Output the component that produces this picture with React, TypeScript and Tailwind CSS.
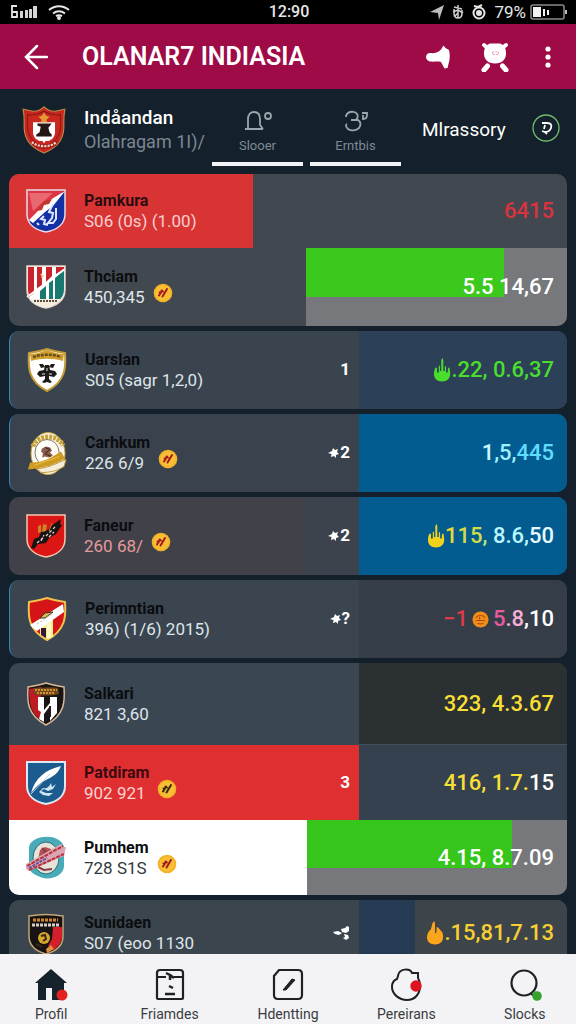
import { ReactNode, useState } from "react";
import clsx from "clsx";

type Segment = { text: string; color: string };
type CoinTone = "plain" | "dark";

type Team = {
  name: string;
  sub: string;
  crest: ReactNode;
  height: string;
  fills: ReactNode;
  value: ReactNode;
  count?: ReactNode;
  coin?: CoinTone;
  nameClass?: string;
  subClass?: string;
};

function Segments({ parts }: { parts: Segment[] }) {
  return (
    <span className="whitespace-pre">
      {parts.map((p, i) => (
        <span key={i} className={p.color}>
          {p.text}
        </span>
      ))}
    </span>
  );
}

function Flame({ className }: { className: string }) {
  return (
    <svg viewBox="0 0 18 24" className={clsx("h-6 w-[18px] shrink-0", className)} fill="currentColor" aria-hidden="true">
      <path d="M9 23.500c-5 0-8-3-8-7.500 0-3 .5-5 1.700-6.500L4 10v4.500h1.800V8l1.200-.5V13h1.300V2L9.500 0l.8 2v11h1.500V8l1.300.5v6h1.600l.3-4.500 1.200-.5c.8 2 1 4.500 1 6.500 0 4.500-3.200 7.500-8.200 7.500z" />
    </svg>
  );
}

function DropFlame({ className }: { className: string }) {
  return (
    <svg viewBox="0 0 18 24" className={clsx("h-6 w-[18px] shrink-0", className)} fill="currentColor" aria-hidden="true">
      <path d="M9 23.500c-5 0-8-3-8-7.200 0-3.300 1.500-5.800 4-8.300L6.500 2 8.500 0 9 3v9l1.300.3.300-6.300 1.500.5 4 4.500c.8 1.500 1 3.300 1 5.300 0 4.200-3.100 7.200-8.100 7.200z" />
    </svg>
  );
}

function Coin({ tone }: { tone: CoinTone }) {
  return (
    <svg viewBox="0 0 20 20" className="mb-1 size-5 shrink-0 self-end" aria-hidden="true">
      <circle cx="10" cy="10" r="9.300" fill="#f2b32b" />
      <circle cx="10" cy="10" r="7.500" fill="#f8bf35" />
      <path
        d="M6 12.500l3-5M9.500 13.500l4.500-7.500M8.500 7.500l1.500 1M6.500 9.500l1 1"
        stroke={tone === "dark" ? "#3a2713" : "#a3191d"}
        strokeWidth="2"
        strokeLinecap="round"
      />
    </svg>
  );
}

function Burst() {
  return (
    <svg viewBox="0 0 12 12" className="size-3 shrink-0" aria-hidden="true">
      <path d="M0 6l4-2 1-3 2 2 3-1-1 3 2 2-3 1v3L6 9l-3 1 .5-3z" fill="#fff" />
    </svg>
  );
}

function Crest({ children, className }: { children: ReactNode; className?: string }) {
  return (
    <svg viewBox="0 0 40 44" className={clsx("shrink-0", className ?? "h-11 w-10")} fill="none" aria-hidden="true">
      {children}
    </svg>
  );
}

const SHIELD = "M1 1h38v24c0 10-8 16-19 18C9 41 1 35 1 25z";
const POINTED = "M20 1c6 2 12 3 18 4 1 14 1 28-18 38C1 33 1 19 2 5 8 4 14 3 20 1z";

const crests = {
  main: (
    <Crest className="h-[50px] w-11">
      <path d="M20 1c3 3 7 4 10 4l9-2c-1 5-1 8-1 12 1 14-4 22-18 28C6 37 1 29 2 15 2 11 2 8 1 3l9 2c3 0 7-1 10-4z" fill="#c92720" stroke="#bd8b45" strokeWidth="1" />
      <path d="M5 8c5 1 10 0 15-3 5 3 10 4 15 3v9c0 10-4 16-15 22C9 33 5 27 5 17z" stroke="#8c1a14" />
      <path d="M10 15h20v9c0 4-3 7-6 8H16c-3-1-6-4-6-8z" fill="#fff" />
      <path d="M14 16h13l-3 4 1 4 2 2v2H13v-2l3-2 1-5-3-1z" fill="#251715" />
      <path d="M18 9l2-3 2 3 3 1-3 3 1 2h-6l1-2-3-3z" fill="#e29a35" />
      <path d="M7 31c4 5 22 6 27-1l-3 6c-6 4-15 4-21 0z" fill="#a3201b" />
      <path d="M9 33c6 5 17 5 22 0" stroke="#f2d6cd" strokeWidth="2" strokeDasharray="2 1" />
      <path d="M18 31l2 3 2-3z" fill="#fff" />
    </Crest>
  ),
  pamkura: (
    <Crest>
      <path d={SHIELD} fill="#1430a5" />
      <path d="M1 1h38L12 27 3 33C1 30 1 28 1 25z" fill="#dc3545" />
      <path d="M3 4h24L7 22z" fill="#e8696f" />
      <path d="M39 2L24 11 15 17 11 23 3 31l4 3 12-11 8-6z" fill="#fff" />
      <path d="M13 18l5-6 8-2-3 5-5 1-2 5-5 1z" fill="#c3352e" />
      <path d="M27 15l-4 8 4 1-1 5-4 5h5l3-4V19M18 27l-3 3 4 1-1 4 4 1M11 34l2 2" stroke="#dfe7ff" strokeWidth="2" />
      <path d={SHIELD} stroke="#e9dbe9" strokeWidth="1.500" />
    </Crest>
  ),
  thciam: (
    <Crest>
      <path d={SHIELD} fill="#fff" />
      <path d="M2 2h6v26l-5 4-1-7zM11 2h5v18l-5 5zM20 2h6v9l-6 6zM30 2h8v2l-8 5z" fill="#c8232b" />
      <path d="M38 5v20c0 4-2 8-5 10h-4V13zM23 18l4-3v20h-4zM14 26l6-5v14h-6z" fill="#17796f" />
      <path d="M1 32L39 4" stroke="#fff" strokeWidth="2" />
      <path d="M5 34h30c-3 5-9 7-15 8-6-1-12-4-15-8z" fill="#f6eedb" />
      <path d="M8 36h24" stroke="#554b42" strokeWidth="2" strokeDasharray="2 1" />
      <path d="M15 9l2 2-1 2" stroke="#f4d9b5" strokeWidth="2" />
      <path d={SHIELD} stroke="#e7d8d0" strokeWidth="1.500" />
    </Crest>
  ),
  uarslan: (
    <Crest>
      <path d={POINTED} fill="#fff" stroke="#c59b35" strokeWidth="2" />
      <path d="M3 6c6 0 12-2 17-4 5 2 11 4 17 4l-1 7c-10-3-22-3-32 0z" fill="#d09f2e" />
      <path d="M6 9c9-3 20-3 28 0" stroke="#65501d" strokeWidth="2.500" strokeDasharray="3 1" />
      <path d="M12 16l4 0 2 3-4 1zM28 16l-4 0-2 3 4 1zM18 17h4l1 5 5 1 2 3-3 3-5-1v3l3 3-2 1-3-1-3 1-2-1 3-3v-3l-5 1-3-3 2-3 5-1z" fill="#1d1c1b" />
      <path d="M15 26h3M22 26h3M20 20v3" stroke="#e9e5dc" />
    </Crest>
  ),
  carhkum: (
    <Crest className="h-[47px] w-10">
      <ellipse cx="21" cy="22" rx="17" ry="21" fill="#f8f6ef" stroke="#c9a43a" strokeWidth="1" />
      <path d="M6 15C10 3 31 2 36 14" stroke="#c9a43a" strokeWidth="5" strokeDasharray="3 1" />
      <ellipse cx="20" cy="21" rx="12" ry="13" stroke="#857760" fill="#fffdf8" />
      <path d="M15 17l4-2 4 1 2 3-2 2 3 3-4 2-4-1-3 1 1-4-2-2z" fill="#8d5d4d" />
      <path d="M18 16l5 2-5 4 6 3" stroke="#352424" />
      <path d="M3 31c11 1 22-5 31-11l4 7C27 34 13 37 1 38z" fill="#cf9b20" />
      <path d="M10 37c10 0 19-5 29-9l-2 7c-8 5-15 6-23 6z" fill="#f5eddb" stroke="#c39a41" />
      <path d="M7 34l25-9" stroke="#e8bf4b" />
    </Crest>
  ),
  faneur: (
    <Crest>
      <path d={SHIELD} fill="#dc1515" stroke="#f3c7b1" strokeWidth="1.500" />
      <path d="M5 34l3-9 5-2 2-5 7-2 3-4 10-7-1 5 2 1-6 9-7 4-3 5-8 1-4 5z" fill="#191313" />
      <path d="M11 29l7-6M20 22l9-9M15 27l3-6M23 23l5-5" stroke="#e9d8cf" strokeWidth="1.200" strokeDasharray="3 2" />
      <path d="M12 12l3-1v7l-3 1zM17 10l4 1-1 6-4 1z" fill="#cb8627" />
      <path d="M26 9l-3 8" stroke="#b98124" />
    </Crest>
  ),
  perimntian: (
    <Crest>
      <path d={POINTED} fill="#d51418" stroke="#f1c34a" strokeWidth="2" />
      <path d="M13 30l7-7h6v17l-6 2-7-4z" fill="#f3ee9a" />
      <path d="M14 31h5v10l-5-3z" fill="#371831" />
      <path d="M3 28L36 7l1 8L10 34c-3-2-5-4-7-6z" fill="#fff" />
      <path d="M20 26h4v15l-4 1z" fill="#fffac0" />
      <path d="M13 21l5-5 8-1-8 6z" fill="#ddb84d" stroke="#37322b" />
      <path d="M10 27l15-10" stroke="#bcae9b" strokeDasharray="2 2" />
    </Crest>
  ),
  salkari: (
    <Crest>
      <path d={POINTED} fill="#171515" stroke="#d9b895" strokeWidth="1.500" />
      <path d="M3 7l12-2v33C6 32 3 25 3 7z" fill="#bd1a24" />
      <path d="M8 6c7 0 17-1 24 0l1 6c-8 2-18 2-25 0z" fill="#744619" />
      <path d="M9 8h22M11 11h18" stroke="#d09335" strokeWidth="2" strokeDasharray="2 1" />
      <path d="M12 15h6v13l6-7v-6h7v16l-7 8V24l-6 8v8l-5-3 2-7-3-2z" fill="#fff" />
      <path d="M24 24v11" stroke="#24191a" strokeWidth="2" />
    </Crest>
  ),
  patdiram: (
    <Crest>
      <path d={SHIELD} fill="#1b5b8e" stroke="#dce9f1" strokeWidth="2" />
      <path d="M5 32C9 17 19 9 35 5c-3 8-9 11-15 14-4 2-8 4-15 13z" fill="#fff" />
      <path d="M5 33L24 13" stroke="#b6d6e8" />
      <path d="M17 27c4 1 6-1 8-5l1 4 4-3-3 5-5 2-4-2-3 2 5 2h7l-4 3-6-1-4-3z" fill="#cde6f1" />
    </Crest>
  ),
  pumhem: (
    <Crest>
      <path d="M10 3C16 0 26 0 31 3c4 2 7 5 7 9v18c0 5-4 9-9 11-5 2-12 2-17-1-5-2-9-5-9-10V12c0-4 3-7 7-9z" fill="#48abb7" />
      <ellipse cx="20" cy="22" rx="13" ry="16" fill="#e8e3d8" stroke="#266c7d" />
      <path d="M14 14l5-3 6 2 2 5-3 5-6 3-6-2z" fill="#b65050" />
      <path d="M16 12l4 4-4 5 8 1M12 31l6 3 8-1" stroke="#873b43" strokeWidth="2" />
      <path d="M0 28l35-20 2 3h3l-2 9-35 15-3-2z" fill="#dca5b2" />
      <path d="M1 30L37 10M3 34l35-16" stroke="#b5313d" strokeWidth="2" strokeDasharray="4 1" />
      <path d="M3 32l18-10" stroke="#5b58a0" strokeWidth="2" strokeDasharray="3 1" />
    </Crest>
  ),
  sunidaen: (
    <Crest>
      <path d="M3 5c11-2 23-2 34 0v20c0 9-6 15-17 18C9 40 3 34 3 25z" fill="#171313" stroke="#c2a67c" strokeWidth="1.500" />
      <path d="M27 16h9v11c-1 5-4 9-8 12l-6-4 4-7z" fill="#d31f2a" />
      <path d="M7 9h25" stroke="#d0862d" strokeWidth="3" strokeDasharray="3 1" />
      <path d="M6 14h28" stroke="#d6cfc8" strokeWidth="3" strokeDasharray="3 1" />
      <circle cx="18" cy="27" r="6" fill="#d7a62d" />
      <path d="M15 25l4-1 1 4-3 2M10 33l6 3" stroke="#3a2913" strokeWidth="2" />
      <path d="M20 38l5-4 3 4-7 4z" fill="#dd9039" />
    </Crest>
  ),
};

const groups: { frame: string; teams: Team[] }[] = [
  {
    frame: "bg-[#42484f]",
    teams: [
      {
        name: "Pamkura",
        sub: "S06 (0s) (1.00)",
        crest: crests.pamkura,
        height: "h-[74px]",
        fills: <div className="w-[244px] bg-[#d93434]" />,
        value: <Segments parts={[{ text: "6415", color: "text-[#d8333f]" }]} />,
        nameClass: "text-[#2c0c10]",
        subClass: "text-[#f8cfd0]",
      },
      {
        name: "Thciam",
        sub: "450,345",
        crest: crests.thciam,
        height: "h-[78px]",
        fills: (
          <div className="ml-auto w-[261px] bg-[#77787b]">
            <div className="h-[49px] w-[198px] bg-[#3cc91e]" />
          </div>
        ),
        value: <Segments parts={[{ text: "5.5 14,67", color: "text-white" }]} />,
        coin: "plain",
      },
    ],
  },
  {
    frame: "border-l border-[#3486bd] bg-[#3a444e]",
    teams: [
      {
        name: "Uarslan",
        sub: "S05 (sagr 1,2,0)",
        crest: crests.uarslan,
        height: "h-[78px]",
        fills: <div className="ml-auto w-52 bg-[#2c4057]" />,
        value: (
          <>
            <Flame className="text-[#4ade2c]" />
            <Segments parts={[{ text: ".22, 0.6,37", color: "text-[#4ade2c]" }]} />
          </>
        ),
        count: "1",
      },
    ],
  },
  {
    frame: "border-l border-[#3486bd] bg-[#3a424d]",
    teams: [
      {
        name: "Carhkum",
        sub: "226 6/9",
        crest: crests.carhkum,
        height: "h-[78px]",
        fills: <div className="ml-auto w-52 bg-[#035c90]" />,
        value: (
          <Segments
            parts={[
              { text: "1", color: "text-[#c9f8ff]" },
              { text: ",5,", color: "text-[#9cf0ff]" },
              { text: "445", color: "text-[#5fdcff]" },
            ]}
          />
        ),
        count: (
          <>
            <Burst />2
          </>
        ),
        coin: "plain",
      },
    ],
  },
  {
    frame: "bg-[#414249]",
    teams: [
      {
        name: "Faneur",
        sub: "260 68/",
        crest: crests.faneur,
        height: "h-[78px]",
        fills: (
          <>
            <div className="ml-auto w-[54px] bg-[#3c434c]" />
            <div className="w-52 bg-[#035c90]" />
          </>
        ),
        value: (
          <>
            <Flame className="text-[#f3d21c]" />
            <Segments
              parts={[
                { text: "1", color: "text-[#e8d932]" },
                { text: "15", color: "text-[#cfdc48]" },
                { text: ", ", color: "text-[#b8e878]" },
                { text: "8.6,", color: "text-[#b9f7ff]" },
                { text: "50", color: "text-[#e6fbff]" },
              ]}
            />
          </>
        ),
        count: (
          <>
            <Burst />2
          </>
        ),
        coin: "plain",
        subClass: "text-[#e59a9c]",
      },
    ],
  },
  {
    frame: "border-l border-[#3486bd] bg-[#3a4550]",
    teams: [
      {
        name: "Perimntian",
        sub: "396) (1/6) 2015)",
        crest: crests.perimntian,
        height: "h-[78px]",
        fills: <div className="ml-auto w-52 bg-[#353e48]" />,
        value: (
          <>
            <span className="text-[#dd3a4a]">−1</span>
            <svg viewBox="0 0 18 18" className="mx-1 size-[17px]" fill="none" aria-hidden="true">
              <circle cx="9" cy="9" r="8.500" fill="#f28c18" />
              <path d="M4 7c3-3 7-3 10 0M4 10h10M6 13c2 1 4 1 6 0M8 6v3" stroke="#a84b0b" strokeWidth="1.200" />
            </svg>
            <Segments
              parts={[
                { text: "5", color: "text-[#e85a9b]" },
                { text: ".8", color: "text-[#f7aed3]" },
                { text: ",10", color: "text-white" },
              ]}
            />
          </>
        ),
        count: (
          <>
            <Burst />?
          </>
        ),
      },
    ],
  },
  {
    frame: "bg-[#3a4652]",
    teams: [
      {
        name: "Salkari",
        sub: "821 3,60",
        crest: crests.salkari,
        height: "h-[82px]",
        fills: <div className="ml-auto w-52 border-b border-[#46505a] bg-[#2b3033]" />,
        value: <Segments parts={[{ text: "323, 4.3.67", color: "text-[#f8df35]" }]} />,
      },
      {
        name: "Patdiram",
        sub: "902 921",
        crest: crests.patdiram,
        height: "h-[75px]",
        fills: (
          <>
            <div className="flex-1 bg-[#df2f30]" />
            <div className="w-52 bg-[#35414e]" />
          </>
        ),
        value: (
          <Segments
            parts={[
              { text: "416, 1.7.", color: "text-[#f8df35]" },
              { text: "15", color: "text-white" },
            ]}
          />
        ),
        count: "3",
        coin: "dark",
        nameClass: "text-[#3a0a10]",
        subClass: "text-[#fbd3d3]",
      },
      {
        name: "Pumhem",
        sub: "728 S1S",
        crest: crests.pumhem,
        height: "h-[75px]",
        fills: (
          <>
            <div className="flex-1 bg-white" />
            <div className="w-[260px] bg-[#77787b]">
              <div className="h-12 w-[205px] bg-[#36c51b]" />
            </div>
          </>
        ),
        value: <Segments parts={[{ text: "4.15, 8.7.09", color: "text-white" }]} />,
        coin: "plain",
        subClass: "text-[#33383d]",
      },
    ],
  },
  {
    frame: "rounded-b-none bg-[#3b454e]",
    teams: [
      {
        name: "Sunidaen",
        sub: "S07 (eoo 1130",
        crest: crests.sunidaen,
        height: "h-[66px]",
        fills: (
          <>
            <div className="ml-auto w-14 bg-[#243b53]" />
            <div className="w-[152px] bg-[#3d444a]" />
          </>
        ),
        value: (
          <>
            <DropFlame className="text-[#fba51a]" />
            <Segments parts={[{ text: ".15,81,7.13", color: "text-[#f5cf33]" }]} />
          </>
        ),
        count: (
          <svg viewBox="0 0 18 16" className="h-4 w-[18px]" fill="#fff" aria-hidden="true">
            <path d="M1 7l5-1 4 2-3 2-4-1zM9 4l4-1 2-2 2 1v4l-3 2-4-1zM12 9l4 1 1 3-3 2-3-2 2-1z" />
          </svg>
        ),
      },
    ],
  },
];

function TeamRow({ team }: { team: Team }) {
  return (
    <li className={clsx("grid", team.height)}>
      <div className="flex [grid-area:1/1]">{team.fills}</div>
      <div className="grid grid-cols-[1fr_208px] items-center [grid-area:1/1]">
        <div className="flex items-center pr-[9px] pl-[17px]">
          {team.crest}
          <div className="ml-[18px] flex gap-2">
            <div>
              <p className={clsx("text-[16px] leading-5 font-bold", team.nameClass ?? "text-[#0b0d10]")}>{team.name}</p>
              <p className={clsx("text-[17px] leading-5 whitespace-nowrap", team.subClass ?? "text-[#dfe5ea]")}>{team.sub}</p>
            </div>
            {team.coin && <Coin tone={team.coin} />}
          </div>
          <div className="ml-auto flex items-center text-[17px] font-bold text-white">{team.count}</div>
        </div>
        <div className="flex items-center justify-end pr-[13px] text-[22px] leading-7 font-medium">{team.value}</div>
      </div>
    </li>
  );
}

function StatusBar() {
  return (
    <div className="grid h-6 shrink-0 grid-cols-3 items-center bg-black pr-2 pl-[10px] text-[16px] leading-5 text-[#e6e6e6]">
      <div className="flex items-center gap-[10px]">
        <svg viewBox="0 0 28 14" className="h-[14px] w-7" fill="none" aria-hidden="true">
          <path d="M7 1H2v11h5V7H2" stroke="#e6e6e6" strokeWidth="1.800" />
          <path d="M10 6h3v7h-3zM15 5h3v8h-3zM19 4h3v9h-3zM23 1h4v12h-4z" fill="#d5d5d5" />
        </svg>
        <svg viewBox="0 0 22 15" className="h-[15px] w-[22px]" fill="none" stroke="#e6e6e6" strokeWidth="2" aria-hidden="true">
          <path d="M1 5c6-5 14-5 20 0M5 8.500c4-3 8-3 12 0M8 11c2-1 4-1 6 0" />
          <circle cx="11" cy="13" r="1" fill="#e6e6e6" />
        </svg>
      </div>
      <div className="text-center font-medium">12:90</div>
      <div className="flex items-center justify-end gap-2">
        <svg viewBox="0 0 14 15" className="h-[15px] w-[14px]" fill="#bdbdbd" aria-hidden="true">
          <path d="M14 0L9 15l-1-7-8-1z" />
        </svg>
        <svg viewBox="0 0 12 16" className="h-4 w-3" fill="none" stroke="#cfcfcf" strokeWidth="1.500" aria-hidden="true">
          <path d="M2 3l8 2M6 1v13M2 5v4c0 3 1 5 4 5s4-2 4-5V6M1 8l5-2 5 3M3 12l3-3" />
        </svg>
        <svg viewBox="0 0 14 16" className="h-4 w-[14px]" fill="none" stroke="#e6e6e6" strokeWidth="2" aria-hidden="true">
          <circle cx="7" cy="9" r="5.500" />
          <circle cx="7" cy="9" r="2" fill="#e6e6e6" />
          <path d="M2 2l4 1 4-2" />
        </svg>
        <span className="text-[17px]">79%</span>
        <svg viewBox="0 0 38 16" className="-ml-1 h-4 w-[38px] shrink-0" fill="none" aria-hidden="true">
          <rect x="1" y="1" width="33" height="14" rx="2" stroke="#8b8b8b" strokeWidth="1.500" />
          <path d="M3 3h8v10H3zM13 5h2v7h-2zM17 6h2v5h-2z" fill="#f3f3f3" />
          <path d="M36 6v4" stroke="#bbb" strokeWidth="2" />
        </svg>
      </div>
    </div>
  );
}

function AppBar() {
  return (
    <header className="flex h-[65px] shrink-0 items-center bg-[#9e0b46] px-6 text-white">
      <button aria-label="Back">
        <svg viewBox="0 0 24 26" className="h-[26px] w-6" fill="none" stroke="currentColor" strokeWidth="2.500" strokeLinecap="round" aria-hidden="true">
          <path d="M23 13H2M13 2L2 13l11 11" />
        </svg>
      </button>
      <h1 className="ml-[34px] flex-1 text-[25px] leading-8 font-semibold whitespace-nowrap">OLANAR7 INDIASIA</h1>
      <button aria-label="Announcements">
        <svg viewBox="0 0 26 24" className="h-6 w-[26px]" fill="currentColor" aria-hidden="true">
          <path d="M5 8c4 .5 8 0 11-3.500L18.500.5l2 2.500 3.500 2c1 4 1 8 0 12l-1.500 6-3 .5-3.500-6.500c-3-1-7 0-11-.5C3 16 1 14.500 1 12s2-4 4-4z" />
        </svg>
      </button>
      <button aria-label="Alarm" className="ml-[30px]">
        <svg viewBox="0 0 28 30" className="h-[30px] w-7" fill="none" aria-hidden="true">
          <path d="M3 3l5 4M25 3l-5 4" stroke="#fff" strokeWidth="4" strokeLinecap="round" />
          <path d="M6.500 24L3 28M21.500 24l3.500 4" stroke="#fff" strokeWidth="5" strokeLinecap="round" />
          <path d="M9 1.500h10c5 2 6 6 6 10 0 6-4 10-11 10s-11-4-11-10c0-4 1-8 6-10z" fill="#fff" />
          <path d="M11.500 10h6v2.500h-6z" stroke="#e9a5bd" strokeDasharray="2 1" />
        </svg>
      </button>
      <button aria-label="More" className="ml-[35px]">
        <svg viewBox="0 0 8 24" className="h-6 w-2" fill="currentColor" aria-hidden="true">
          <circle cx="4" cy="4" r="2.600" />
          <circle cx="4" cy="12" r="2.600" />
          <circle cx="4" cy="20" r="2.600" />
        </svg>
      </button>
    </header>
  );
}

const tabs = [
  {
    label: "Slooer",
    icon: (
      <>
        <path d="M1 19h18M4 19V9c0-5 3-7 6-7 4 0 6 3 6 7v6l3 4" />
        <circle cx="24" cy="6" r="3" />
      </>
    ),
  },
  {
    label: "Erntbis",
    icon: (
      <>
        <path d="M4 7c0-4 4-6 8-5 4 1 5 5 2 8h2c3 2 3 5 1 8-3 3-8 3-11 1-2-2-3-4-1-5M9 10h5" />
        <path d="M20 3h5v2c0 2-1 4-4 4V5" />
      </>
    ),
  },
];

function ClubHeader() {
  const [active, setActive] = useState(0);
  return (
    <section className="flex h-[77px] shrink-0">
      <div className="flex flex-1 items-center gap-[18px] pt-1 pl-[22px]">
        {crests.main}
        <div className="whitespace-nowrap">
          <p className="text-[19px] leading-6 font-medium text-white">Indåandan</p>
          <p className="text-[18px] leading-6 text-[#7c8791]">Olahragam 1I)/</p>
        </div>
      </div>
      <div role="tablist" className="flex gap-[7px]">
        {tabs.map((tab, i) => (
          <button
            key={tab.label}
            role="tab"
            aria-selected={active === i}
            onClick={() => setActive(i)}
            className="flex w-[91px] flex-col items-center justify-end border-b-4 border-[#f1f4f6] text-[#7d8a96]"
          >
            <svg viewBox="0 0 28 22" className="h-[22px] w-7" fill="none" stroke="#9aa5af" strokeWidth="1.800" aria-hidden="true">
              {tab.icon}
            </svg>
            <span className="pt-1 pb-[6px] text-[13px] leading-5">{tab.label}</span>
          </button>
        ))}
      </div>
      <div className="flex w-[175px] items-center justify-between pr-4 pl-[21px] text-white">
        <span className="pt-1 text-[19px] leading-6">Mlrassory</span>
        <button aria-label="Help">
          <svg viewBox="0 0 28 28" className="size-7" fill="none" aria-hidden="true">
            <circle cx="14" cy="14" r="13" stroke="#6fbf6c" strokeWidth="1.300" />
            <path d="M10 9h5c4 0 5 2 4 5-1 3-3 4-6 4l-3-1M13 11l-1 4M13 18l2 2" stroke="#fff" strokeWidth="1.800" />
          </svg>
        </button>
      </div>
    </section>
  );
}

const navItems = [
  {
    label: "Profil",
    icon: (
      <>
        <path d="M17 1L1 15h3v17h8V20h6v12h12V15h3z" fill="#16232d" />
        <circle cx="28" cy="27" r="5.500" fill="#e3211f" />
      </>
    ),
  },
  {
    label: "Friamdes",
    icon: (
      <g stroke="#1d2124" strokeWidth="2.200">
        <path d="M4 9v21c0 1 0 1 1 1h24c1 0 1 0 1-1V9M4 9V5c0-2 1-3 3-3h20c2 0 3 1 3 3v4M4 9h9M21 9h9" />
        <path d="M13 5l4 2v5M17 7l4 3M16 18l4 2M12 26h10" strokeWidth="2.500" />
      </g>
    ),
  },
  {
    label: "Hdentting",
    icon: (
      <>
        <path d="M8 2h19c3 0 4 1 4 4v21c0 3-1 4-4 4H7c-3 0-4-1-4-4V8z" stroke="#1d2124" strokeWidth="2.200" />
        <path d="M12 22l9-11 3 1-9 10z" fill="#1d2124" stroke="#1d2124" />
      </>
    ),
  },
  {
    label: "Pereirans",
    icon: (
      <>
        <path d="M9 8c1-8 12-8 14-3h6v5c2 3 2 5 2 8 0 8-5 14-13 14S3 26 3 19c0-4 2-7 5-8z" stroke="#1d2124" strokeWidth="2" />
        <circle cx="27" cy="18" r="5.700" fill="#dd1420" />
      </>
    ),
  },
  {
    label: "Slocks",
    icon: (
      <>
        <circle cx="16" cy="15" r="12.500" stroke="#1d2124" strokeWidth="2.200" />
        <path d="M23 26l5 3" stroke="#1d2124" strokeWidth="2" />
        <circle cx="29" cy="28" r="4.800" fill="#35a32b" />
      </>
    ),
  },
];

function BottomNav() {
  return (
    <nav className="h-[70px] shrink-0 overflow-hidden bg-[#f3f3f5]">
      <ul className="-mx-2 grid grid-cols-5">
        {navItems.map((item) => (
          <li key={item.label}>
            <a href="#" className="flex flex-col items-center pt-[14px] text-[14px] leading-5 text-[#393c40]">
              <svg viewBox="0 0 34 34" className="mb-[2px] size-[34px]" fill="none" aria-hidden="true">
                {item.icon}
              </svg>
              {item.label}
            </a>
          </li>
        ))}
      </ul>
    </nav>
  );
}

export default function App() {
  return (
    <div className="flex h-screen flex-col overflow-hidden bg-[#14202b] font-[Roboto,'Liberation_Sans',sans-serif]">
      <StatusBar />
      <AppBar />
      <ClubHeader />
      <main className="min-h-0 flex-1 overflow-hidden px-[9px] pt-2">
        <div className="flex flex-col gap-[5px]">
          {groups.map((group, i) => (
            <ul key={i} className={clsx("shrink-0 overflow-hidden rounded-[10px]", group.frame)}>
              {group.teams.map((team) => (
                <TeamRow key={team.name} team={team} />
              ))}
            </ul>
          ))}
        </div>
      </main>
      <BottomNav />
    </div>
  );
}
